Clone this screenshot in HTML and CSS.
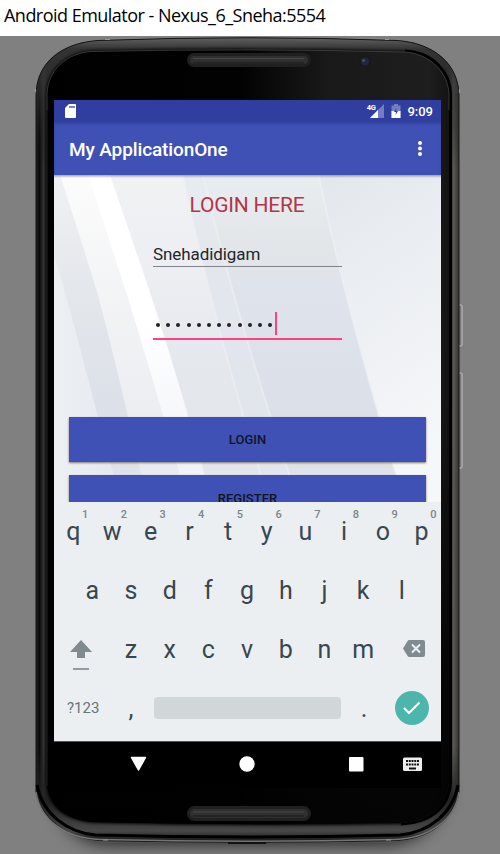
FILE: index.html
```html
<!DOCTYPE html>
<html lang="en">
<head>
<meta charset="utf-8">
<title>Android Emulator</title>
<link rel="stylesheet" href="styles.css">
</head>
<body>
<header class="window-title"><span>Android Emulator - Nexus_6_Sneha:5554</span></header>
<main class="desktop">
<svg class="phone" viewBox="0 36 500 818" aria-hidden="true">
  <defs>
    <linearGradient id="rim" x1="36" x2="459" y1="0" y2="0" gradientUnits="userSpaceOnUse">
      <stop offset="0" stop-color="#222"/><stop offset=".008" stop-color="#090909"/><stop offset=".018" stop-color="#343434"/><stop offset=".028" stop-color="#161616"/><stop offset=".5" stop-color="#3a3a3a"/><stop offset=".965" stop-color="#070707"/><stop offset=".975" stop-color="#111"/><stop offset=".987" stop-color="#5a5854"/><stop offset="1" stop-color="#333"/>
    </linearGradient>
    <linearGradient id="edge" x1="0" x2="0" y1="38" y2="843" gradientUnits="userSpaceOnUse">
      <stop offset="0" stop-color="#606060"/><stop offset=".014" stop-color="#333"/><stop offset=".06" stop-color="#333" stop-opacity=".7"/><stop offset=".16" stop-color="#111" stop-opacity="0"/><stop offset=".88" stop-color="#222" stop-opacity="0"/><stop offset=".95" stop-color="#222"/><stop offset=".985" stop-color="#484848"/><stop offset="1" stop-color="#111"/>
    </linearGradient>
    <linearGradient id="glass" x1="47" x2="449" y1="0" y2="0" gradientUnits="userSpaceOnUse">
      <stop offset="0" stop-color="#000"/><stop offset=".48" stop-color="#020202"/><stop offset=".7" stop-color="#191919"/><stop offset=".95" stop-color="#1d1e1d"/><stop offset="1" stop-color="#121312"/>
    </linearGradient>
    <linearGradient id="fade" x1="0" x2="0" y1="45" y2="825" gradientUnits="userSpaceOnUse">
      <stop offset=".45" stop-color="#000" stop-opacity="0"/><stop offset=".82" stop-color="#000" stop-opacity=".75"/><stop offset="1" stop-color="#000" stop-opacity=".85"/>
    </linearGradient>
    <filter id="soft" x="-20%" y="-100%" width="140%" height="300%"><feGaussianBlur stdDeviation="9"/></filter>
    <filter id="slight"><feGaussianBlur stdDeviation="1.4"/></filter>
  </defs>
  <path d="M52 786Q64 843 110 843H386Q436 840 448 786Z" fill="#111" opacity=".85" filter="url(#soft)"/>
  <rect x="458" y="305" width="4" height="41" rx="1" fill="#777" stroke="#c4c4c4"/>
  <rect x="458" y="373" width="4" height="95" rx="1" fill="#777" stroke="#c4c4c4"/>
  <path d="M36 96C36 62 62 43 98 40.500Q248 35 397 40.500C434 43 459 64 459 96V792C455 820 430 839 395 840.5Q248 844 100 840.5C65 838 40 817 36 792Z" fill="url(#rim)"/>
  <path d="M36 96C36 62 62 43 98 40.500Q248 35 397 40.500C434 43 459 64 459 96V792C455 820 430 839 395 840.5Q248 844 100 840.5C65 838 40 817 36 792Z" fill="url(#edge)" stroke="#151515"/>
  <path d="M36 792C40 820 65 838 100 839.5Q248 843 395 839.5C430 838 455 820 459 792" fill="none" stroke="#747474" stroke-width="1.500"/>
  <path d="M37 785C42 813 66 832 95 835Q248 839 400 835C430 832 453 813 458 785" fill="none" stroke="#000" stroke-width="3"/>
  <path d="M47 94C48 68 69 53 91 51.500Q248 48 405 52C431 54 448 73 449 94V783C447 808 428 821 401 823Q248 826 94 822C67 820 49 808 47 783Z" fill="#000" stroke="#000" stroke-width="2" filter="url(#slight)"/>
  <path d="M405 51C433 52 450.500 73 450.500 94V783C448 809 429 823 401 824" fill="none" stroke="#000" stroke-width="3"/>
  <path d="M47 94C48 68 69 53 91 51.500Q248 48 405 52C431 54 448 73 449 94V783C447 808 428 821 401 823Q248 826 94 822C67 820 49 808 47 783Z" fill="url(#glass)"/>
  <path d="M47 94C48 68 69 53 91 51.500Q248 48 405 52C431 54 448 73 449 94V783C447 808 428 821 401 823Q248 826 94 822C67 820 49 808 47 783Z" fill="url(#fade)"/>
  <path d="M47 110V94C48 68 69 53 91 51.500Q248 48 405 52C431 54 448 73 449 94V110" fill="none" stroke="#555" stroke-width=".6"/>
  <path d="M47 96V786" stroke="#222"/>
  <g fill="#303030" stroke="#202020" stroke-width="3"><rect x="188.500" y="54.500" width="121" height="11" rx="5.500"/><rect x="188.500" y="807.500" width="121" height="12" rx="6"/></g>
  <path d="M193 58.500H304M193 812H304" stroke="#484848"/>
  <path d="M193 63H304M193 816H304" stroke="#191919"/>
  <circle cx="365" cy="61.500" r="6" fill="#191919"/><circle cx="365" cy="61.500" r="4" fill="#20263d"/><circle cx="363.500" cy="60.500" r="1.500" fill="#40507b"/>
  <path d="M105 39.500h5M385 39.500h4M35.500 89v3M459.500 89v4M103 840h5M386 840h5" stroke="#999" stroke-width="1.200"/>
  <path d="M228 843h38" stroke="#111" stroke-width="2"/>
</svg>
<section class="screen">
  <div class="status">
    <svg class="sd" viewBox="0 0 11 14"><path d="M4 0h6q1 0 1 1v12q0 1-1 1H1q-1 0-1-1V4z" fill="#fff"/><path d="M4 2h6v2H4z" fill="#7982c3"/></svg>
    <span class="network">4G</span>
    <svg class="signal" viewBox="0 0 14 14"><path d="M14 0V14H0z" fill="#737dc1"/><path d="M8 6v8H0z" fill="#fff"/></svg>
    <svg class="battery" viewBox="0 0 10 14"><path d="M3 0h4v1.500h2.500V14H.5V1.500H3z" fill="#737dc1"/><path d="M.5 7h9v7h-9z" fill="#fff"/><path d="M5.500 4 3 8H5l-.5 3L7 7H5z" fill="#303f9f"/></svg>
    <time>9:09</time>
  </div>
  <div class="appbar"><h1>My ApplicationOne</h1><svg class="more" viewBox="0 0 4 15"><g fill="#fff"><circle cx="2" cy="2" r="2"/><circle cx="2" cy="7.500" r="2"/><circle cx="2" cy="13" r="2"/></g></svg></div>
  <div class="content">
    <svg class="wallpaper" viewBox="54 175 387 327" preserveAspectRatio="none">
      <defs>
        <linearGradient id="g1" x1="0" x2="0" y1="0" y2="1"><stop stop-color="#f0f1f4"/><stop offset=".35" stop-color="#e4e7eb"/><stop offset=".7" stop-color="#dce1e9"/><stop offset="1" stop-color="#e1e3e8"/></linearGradient>
        <linearGradient id="g2" x1="0" x2="0" y1="0" y2="1"><stop stop-color="#fcfcfc"/><stop offset=".4" stop-color="#f2f3f5"/><stop offset="1" stop-color="#e6e9ee"/></linearGradient>
        <linearGradient id="g3" x1="0" x2="0" y1="0" y2="1"><stop stop-color="#fff"/><stop offset=".45" stop-color="#fff"/><stop offset="1" stop-color="#eef0f4"/></linearGradient>
        <linearGradient id="g4" x1="0" x2="0" y1="0" y2="1"><stop stop-color="#f1f2f4"/><stop offset=".3" stop-color="#eceef2"/><stop offset=".6" stop-color="#e4e7eb"/><stop offset="1" stop-color="#e2e5ea"/></linearGradient>
        <linearGradient id="g5" x1="0" x2="0" y1="0" y2="1"><stop stop-color="#eaedf0"/><stop offset=".25" stop-color="#e2e5e8"/><stop offset=".35" stop-color="#dfe3ec"/><stop offset=".75" stop-color="#dadfe8"/><stop offset="1" stop-color="#e3e5e9"/></linearGradient>
        <linearGradient id="g6" x1="0" x2=".25" y1="0" y2="1"><stop stop-color="#e3e6ea"/><stop offset=".35" stop-color="#eaedf1"/><stop offset=".8" stop-color="#f2f4f7"/><stop offset="1" stop-color="#f6f7f8"/></linearGradient>
        <linearGradient id="g7" x1="0" x2="1"><stop stop-color="#edf0f3"/><stop offset="1" stop-color="#e5e8ed"/></linearGradient>
      </defs>
      <path d="M54 175h387v327H54z" fill="url(#g1)"/>
      <path d="M54 255Q66 293 98 417L121 502H54z" fill="url(#g7)"/>
      <path d="M60 175H88Q147 350 187 502H147Q123 390 98 295Q78 230 60 175z" fill="url(#g2)"/>
      <path d="M110 175H183Q212 310 269 502H212Q183 395 151 295z" fill="url(#g4)"/>
      <path d="M88 175H110L151 295Q184 396 212 502H187Q163 412 127 295z" fill="url(#g3)"/>
      <path d="M183 175H319Q342 295 404 502H269Q210 310 183 175z" fill="url(#g5)"/>
      <path d="M183 175h20Q229 292 298 502H269Q210 310 183 175z" fill="#e6e9ee" opacity=".55"/>
      <path d="M319 175H441V502H404Q342 295 319 175z" fill="url(#g6)"/>
      <path d="M183 175Q210 310 269 502M203 175Q229 292 298 502M319 175Q342 295 404 502" fill="none" stroke="#f0f1f4" stroke-width="2" opacity=".55"/>
    </svg>
    <form class="login">
      <h2>LOGIN HERE</h2>
      <div class="field name">Snehadidigam</div>
      <div class="field password"><span class="dots"><i></i><i></i><i></i><i></i><i></i><i></i><i></i><i></i><i></i><i></i><i></i><i></i></span><span class="caret"></span></div>
      <button type="button">LOGIN</button>
      <button type="button">REGISTER</button>
    </form>
  </div>
  <div class="keyboard">
    <div class="row"><b>q<sup>1</sup></b><b>w<sup>2</sup></b><b>e<sup>3</sup></b><b>r<sup>4</sup></b><b>t<sup>5</sup></b><b>y<sup>6</sup></b><b>u<sup>7</sup></b><b>i<sup>8</sup></b><b>o<sup>9</sup></b><b>p<sup>0</sup></b></div>
    <div class="row middle"><b>a</b><b>s</b><b>d</b><b>f</b><b>g</b><b>h</b><b>j</b><b>k</b><b>l</b></div>
    <div class="row third"><span class="shift"><svg viewBox="0 0 22 30"><path d="M11 0 22 12H15v6H7v-6H0z" fill="#808b8f"/><path d="M3 28h16v2H3z" fill="#929b9f"/></svg></span><b>z</b><b>x</b><b>c</b><b>v</b><b>b</b><b>n</b><b>m</b><span class="delete"><svg viewBox="0 0 22 17"><path d="M6 0h14q2 0 2 2v13q0 2-2 2H6Q5 17 4 15L0 8.500 4 2Q5 0 6 0z" fill="#808b8f"/><path d="m9 4.500 8 8m0-8-8 8" stroke="#eceff1" stroke-width="2"/></svg></span></div>
    <div class="row bottom"><span class="symbols">?123</span><b>,</b><span class="space"></span><b>.</b><span class="enter"><svg viewBox="0 0 34 34"><circle cx="17" cy="17" r="17" fill="#4db6ac"/><path d="m9 17 5 5L24.500 11.500" fill="none" stroke="#fff" stroke-width="2"/></svg></span></div>
  </div>
  <svg class="nav" viewBox="0 0 387 47">
    <path d="M0 .5H387" stroke="#555"/>
    <path d="M77.500 16.500H91.500L84.500 29z" fill="#fff" stroke="#fff" stroke-width="1.500" stroke-linejoin="round"/>
    <circle cx="193" cy="23" r="7.700" fill="#fff"/><rect x="295" y="16" width="14.500" height="14.500" rx="1" fill="#fff"/>
    <rect x="349" y="16.500" width="19" height="13.500" rx="1.500" fill="#eee"/>
    <path d="M352 20h13M352 23.500h13" stroke="#111" stroke-width="2" stroke-dasharray="2 .75"/><path d="M355 27.500h7" stroke="#111" stroke-width="2"/>
  </svg>
</section>
</main>
</body>
</html>
```
FILE: styles.css
```css
* { box-sizing: border-box; }
body { margin: 0; width: 500px; height: 854px; overflow: hidden; background: #808080; font-family: Roboto, sans-serif; }
svg { display: block; flex: none; }
.window-title { height: 36px; padding-left: 4px; background: #fff; color: #000; font: 18px/30px "Open Sans", "Noto Sans", sans-serif; white-space: nowrap; letter-spacing: -.52px; }
.desktop { position: relative; height: 818px; padding: 64px 59px 0 54px; }
.phone { position: absolute; inset: 0; width: 500px; height: 818px; }
.screen { position: relative; width: 387px; height: 688px; }
.status { height: 22px; display: flex; align-items: center; background: #303f9f; color: #fff; padding: 0 8px 0 11px; }
.sd { width: 11px; height: 14px; }
.network { margin-left: auto; font-size: 7.500px; font-weight: 700; line-height: 8px; align-self: flex-start; margin-top: 4px; letter-spacing: -.4px; }
.signal { width: 14px; height: 14px; margin-left: -5px; }
.battery { width: 10px; height: 14px; margin: 0 6px 0 7px; }
.status time { font-size: 13px; font-weight: 500; }
.appbar { height: 53px; padding: 0 19px 0 15px; display: flex; justify-content: space-between; align-items: center; background: #3f51b5; box-shadow: inset 0 2px 2px #3443a2; position: relative; z-index: 1; }
.appbar h1 { margin: 2px 0 0; color: #fff; font-size: 19px; line-height: 24px; font-weight: 500; letter-spacing: -.12px; }
.more { width: 4px; height: 15px; }
.content { height: 327px; overflow: hidden; position: relative; }
.wallpaper { position: absolute; inset: 0; width: 387px; height: 327px; }
.login { position: relative; margin: 0; padding: 18px 15px 0; display: flex; flex-direction: column; align-items: center; }
.login::before { content: ""; position: absolute; inset: 0 0 auto; height: 3px; background: linear-gradient(#777b86aa, #fff0); }
.login h2 { margin: 0 1px 0 0; height: 24px; font-size: 21px; line-height: 24px; font-weight: 400; color: #b13649; letter-spacing: -.22px; }
.field { width: 189px; color: #222629; }
.name { margin-top: 24px; height: 26px; border-bottom: 1px solid #808388; font-size: 17px; line-height: 26px; letter-spacing: -.08px; }
.password { height: 73px; padding-bottom: 2px; border-bottom: 2px solid #ff4081; display: flex; align-items: flex-end; }
.dots { display: flex; gap: 6.200px; height: 23px; align-items: center; padding-left: 3px; }
.dots i { width: 4px; height: 4px; border-radius: 50%; background: #202326; }
.caret { width: 2px; height: 23px; margin: 0 0 1px 3px; background: #ff4081; }
.login button { width: 357px; height: 45px; border: 0; padding: 0; background: #3f51b5; color: #111522; font: 500 13px/45px Roboto, sans-serif; box-shadow: 0 1px 2px #777; margin-top: 77px; }
.login button + button { margin-top: 13px; padding-top: 1px; }
.keyboard { height: 239px; background: #eceff1; color: #37474f; position: relative; }
.row { display: flex; height: 59px; }
.row b { width: 38.700px; text-align: center; position: relative; font-weight: 400; font-size: 25px; line-height: 60px; }
.row sup { position: absolute; left: 28px; top: 7px; font-size: 11px; line-height: 12px; font-weight: 500; color: #7b868b; }
.middle { padding-left: 19px; }
.shift { width: 57.700px; padding: 20px 0 0 16px; }
.shift svg { width: 22px; height: 30px; }
.delete { padding: 20px 0 0 20.500px; }
.delete svg { width: 22px; height: 17px; }
.symbols { width: 57.600px; padding-left: 13px; line-height: 59px; font-size: 15px; color: #66747a; }
.space { width: 187px; height: 22px; margin: 18px 3.500px 0 4px; border-radius: 4px; background: #d1d6d9; }
.enter { padding: 12px 0 0 11.500px; }
.enter svg { width: 34px; height: 34px; }
.nav { width: 387px; height: 47px; background: #000; }
```
